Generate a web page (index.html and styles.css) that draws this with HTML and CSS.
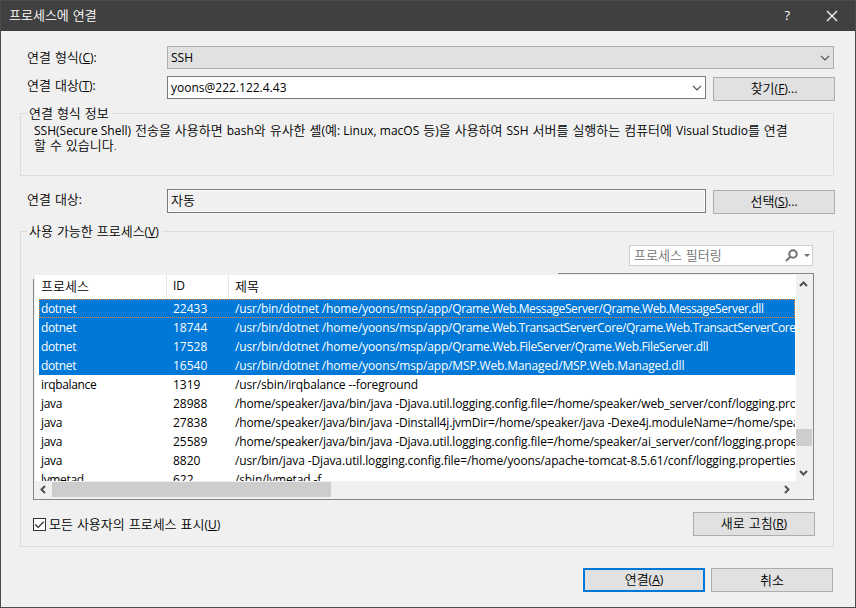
FILE: index.html
```html
<!DOCTYPE html>
<html lang="ko">
<head>
<meta charset="utf-8">
<title>프로세스에 연결</title>
<link rel="stylesheet" href="styles.css">
</head>
<body>
<div class="dialog">
  <header class="titlebar">
    <h1>프로세스에 연결</h1>
    <span class="help">?</span>
    <svg class="close" width="12" height="12" viewBox="0 0 12 12"><path d="M1 1l10 10M11 1L1 11"/></svg>
  </header>
  <main>
    <div class="row row-type">
      <label>연결 형식<span class="en">(<u>C</u>):</span></label>
      <div class="combo disabled"><span class="en">SSH</span><svg class="chev" width="10" height="6" viewBox="0 0 10 6"><path d="M1 .8l4 4 4-4"/></svg></div>
    </div>
    <div class="row row-target">
      <label>연결 대상<span class="en">(<u>T</u>):</span></label>
      <div class="combo"><span class="en">yoons@222.122.4.43</span><svg class="chev" width="10" height="6" viewBox="0 0 10 6"><path d="M1 .8l4 4 4-4"/></svg></div>
      <button>찾기<span class="en">(<u>F</u>)...</span></button>
    </div>
    <section class="group info">
      <h2>연결 형식 정보</h2>
      <p><span class="en">SSH(Secure Shell)</span> 전송을 사용하면 <span class="en">bash</span>와 유사한 셸<span class="en">(</span>예<span class="en">: Linux, macOS</span> 등<span class="en">)</span>을 사용하여 <span class="en">SSH</span> 서버를 실행하는 컴퓨터에 <span class="en">Visual Studio</span>를 연결<br>할 수 있습니다.</p>
    </section>
    <div class="row row-auto">
      <label>연결 대상<span class="en">:</span></label>
      <div class="readonly">자동</div>
      <button>선택<span class="en">(<u>S</u>)...</span></button>
    </div>
    <section class="group processes">
      <h2>사용 가능한 프로세스<span class="en">(<u>V</u>)</span></h2>
      <div class="filter">
        <span>프로세스 필터링</span>
        <svg class="mag" width="13" height="13" viewBox="0 0 13 13"><circle cx="8" cy="5" r="3.7"/><path d="M5.4 7.6L1 12"/></svg>
        <i class="drop"></i>
      </div>
      <div class="list">
        <div class="view">
          <div class="tr head"><b>프로세스</b><b class="en">ID</b><b>제목</b></div>
          <div class="rows en">
            <div class="tr sel focus"><span>dotnet</span><span>22433</span><span>/usr/bin/dotnet /home/yoons/msp/app/<em class="tight">Qrame.Web.MessageServer/Qrame.Web.MessageServer.dll</em></span></div>
            <div class="tr sel"><span>dotnet</span><span>18744</span><span>/usr/bin/dotnet /home/yoons/msp/app/<em class="tight">Qrame.Web.TransactServerCore/Qrame.Web.TransactServerCore.dll</em></span></div>
            <div class="tr sel"><span>dotnet</span><span>17528</span><span>/usr/bin/dotnet /home/yoons/msp/app/<em class="snug">Qrame.Web.FileServer/Qrame.Web.FileServer.dll</em></span></div>
            <div class="tr sel"><span>dotnet</span><span>16540</span><span>/usr/bin/dotnet /home/yoons/msp/app/MSP.Web.Managed/MSP.Web.Managed.dll</span></div>
            <div class="tr"><span>irqbalance</span><span>1319</span><span>/usr/sbin/irqbalance --foreground</span></div>
            <div class="tr"><span>java</span><span>28988</span><span>/home/speaker/java/bin/java -Djava.util.logging.config.file=/home/speaker/web_server/conf/logging.properties</span></div>
            <div class="tr"><span>java</span><span>27838</span><span>/home/speaker/java/bin/java -Dinstall4j.jvmDir=/home/speaker/java -Dexe4j.moduleName=/home/speaker</span></div>
            <div class="tr"><span>java</span><span>25589</span><span>/home/speaker/java/bin/java -Djava.util.logging.config.file=/home/speaker/ai_server/conf/logging.properties</span></div>
            <div class="tr loose"><span>java</span><span>8820</span><span>/usr/bin/java -Djava.util.logging.config.file=/home/yoons/apache-tomcat-8.5.61/conf/logging.properties</span></div>
            <div class="tr"><span>lvmetad</span><span>622</span><span>/sbin/lvmetad -f</span></div>
          </div>
        </div>
        <div class="vbar">
          <svg width="9" height="6" viewBox="0 0 9 6"><path d="M1 5l3.5-3.5L8 5"/></svg>
          <i></i>
          <svg width="9" height="6" viewBox="0 0 9 6"><path d="M1 1l3.5 3.5L8 1"/></svg>
        </div>
        <div class="hbar">
          <svg width="6" height="9" viewBox="0 0 6 9"><path d="M5 1L1.5 4.5 5 8"/></svg>
          <i></i>
          <svg width="6" height="9" viewBox="0 0 6 9"><path d="M1 1l3.5 3.5L1 8"/></svg>
        </div>
      </div>
      <div class="under">
        <label class="check"><svg width="13" height="13" viewBox="0 0 13 13"><rect x=".5" y=".5" width="12" height="12"/><path d="M2.3 6.5l2.9 2.9 5.5-5.7"/></svg><span>모든 사용자의 프로세스 표시<span class="en">(<u>U</u>)</span></span></label>
        <button>새로 고침<span class="en">(<u>R</u>)</span></button>
      </div>
    </section>
    <footer>
      <button class="default">연결<span class="en">(<u>A</u>)</span></button>
      <button>취소</button>
    </footer>
  </main>
</div>
</body>
</html>
```
FILE: styles.css
```css
* { box-sizing: border-box; }
body {
  margin: 0;
  font: 350 13px/16px "Open Sans", "Noto Sans CJK KR", sans-serif;
  word-spacing: .6px;
  color: #000;
}
h1, h2, p { margin: 0; font-size: inherit; font-weight: inherit; }
b { font-weight: inherit; }
em { font-style: normal; }
u { text-underline-offset: 1px; text-decoration-thickness: 1px; }
.en { font-size: 12px; font-weight: 400; word-spacing: 0; }
svg { fill: none; flex: none; }
.dialog {
  width: 856px;
  height: 608px;
  border: 1px solid #4b4b4b;
  background: #f0f0f0;
  overflow: hidden;
}
.titlebar {
  display: flex;
  align-items: center;
  height: 30px;
  padding: 0 17px 2px 8px;
  background: #404040;
  color: #fff;
}
.titlebar h1 { flex: 1; }
.help { margin-right: 36px; font-size: 13px; font-weight: 500; }
.close { stroke: #fff; stroke-width: 1.2; margin-top: 1px; }
main { padding: 15px 21px 0 19px; }
.row { display: flex; align-items: flex-start; white-space: nowrap; }
.row label { width: 147px; padding: 3px 0 0 7px; }
.row-type { height: 30px; }
.row-target { height: 37px; }
.row-target label { padding-top: 1px; }
.row-auto label { padding-top: 2px; }
.combo {
  display: flex;
  align-items: center;
  justify-content: space-between;
  width: 539px;
  height: 23px;
  padding: 0 3px;
  border: 1px solid #7a7a7a;
  background: #fff;
}
.combo.disabled { width: 667px; background: #e1e1e1; border-color: #adadad; }
.chev { stroke: #505050; stroke-width: 1.2; }
button {
  flex: none;
  width: 122px;
  height: 24px;
  padding: 0 0 1px;
  border: 1px solid #adadad;
  background: #e1e1e1;
  font: inherit;
  word-spacing: inherit;
  color: #000;
}
.row button { margin: 1px -1px 0 7px; }
.group { border: 1px solid #dcdcdc; }
.group h2 {
  width: max-content;
  height: 16px;
  margin: -9px 0 0 6px;
  padding: 0 3px 0 2px;
  background: #f0f0f0;
}
.info { height: 63px; margin-bottom: 13px; }
.info p { padding: 2px 0 0 13px; line-height: 15px; white-space: nowrap; }
.row-auto { height: 42px; }
.readonly {
  width: 539px;
  height: 24px;
  padding: 2px 3px;
  border: 1px solid #7a7a7a;
  box-shadow: inset 0 0 0 1px #fff;
}
.processes { height: 316px; padding: 0 18px 0 12px; }
.processes h2 { margin-left: -6px; }
.filter {
  display: flex;
  align-items: center;
  width: 184px;
  height: 21px;
  margin: 6px 2px 7px auto;
  padding: 0 2px 1px 4px;
  border: 1px solid #cccedb;
  background: #fff;
  color: #717171;
}
.filter span { flex: 1; }
.mag { stroke: #717171; stroke-width: 2; margin-right: 6px; }
.drop { border: 3px solid transparent; border-top-color: #717171; border-bottom: 0; }
.list {
  position: relative;
  display: grid;
  grid-template: 206px 16px / 761px 16px;
  width: 781px;
  height: 227px;
  padding: 2px;
  border: 1px solid #828790;
  border-width: 0 1px 1px 0;
  background: #f0f0f0;
}
.list::before, .list::after { content: ""; position: absolute; background: #828790; }
.list::before { left: 0; top: 6px; bottom: 0; width: 1px; }
.list::after { left: 525px; right: 0; top: 0; height: 1px; }
.view { background: #fff; overflow: hidden; }
.tr {
  display: grid;
  grid-template-columns: 128px 62px 1fr;
  height: 19px;
  margin: 0 1px 0 4px;
  line-height: 19px;
  white-space: nowrap;
}
.tr > * { padding-left: 2px; overflow: hidden; }
.tr > :nth-child(2) { padding-left: 6px; }
.tr > :nth-child(3) { padding-left: 6px; }
.head { height: 24px; line-height: 22px; }
.head b:nth-child(-n+2) { border-right: 1px solid #e5e5e5; }
.rows { height: 182px; overflow: hidden; }
.rows span:first-child { letter-spacing: -.35px; }
.rows span:last-child { letter-spacing: -.15px; }
.tight { letter-spacing: -.385px; }
.snug { letter-spacing: -.34px; }
.rows .loose span:last-child { letter-spacing: -.12px; }
.sel { background: #0078d7; color: #fff; }
.focus { outline: 1px dotted #ff8728; outline-offset: -1px; }
.vbar, .hbar { display: flex; align-items: center; background: #f0f0f0; }
.vbar { flex-direction: column; padding: 6px 1px 5px 0; }
.vbar i { width: 16px; height: 17px; margin: 142px 0 auto; background: #cdcdcd; }
.hbar { padding: 0 6px 0 5px; }
.hbar i { width: 279px; height: 15px; margin: 0 auto 0 6px; background: #cdcdcd; }
.vbar svg, .hbar svg { stroke: #505050; stroke-width: 2; }
.under { display: flex; justify-content: space-between; padding-top: 12px; }
.check { display: flex; align-items: center; height: 24px; gap: 3px; }
.check rect { fill: #fff; stroke: #333; }
.check path { stroke: #333; stroke-width: 1.3; }
footer { display: flex; justify-content: flex-end; gap: 6px; padding: 21px 1px 0 0; }
.default { border: 2px solid #0078d7; }
```
